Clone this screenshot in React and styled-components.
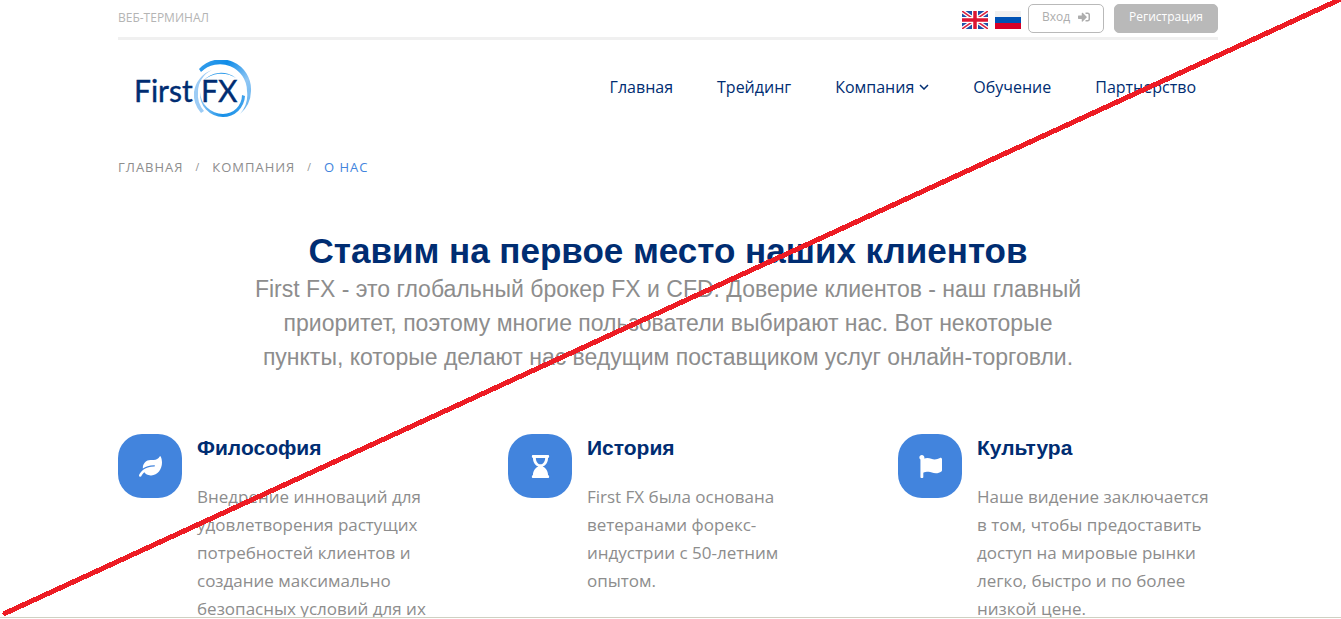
import React from "react";
import styled, { createGlobalStyle } from "styled-components";
import { FaLeaf, FaHourglassEnd, FaFlag, FaSignInAlt } from "react-icons/fa";

const navy = "#002d72";
const blue = "#4284dd";
const grey = "#8d8d8d";
const pale = "#b4b4b4";

const GlobalStyle = createGlobalStyle`
  *, *::before, *::after { box-sizing: border-box; }
  body {
    margin: 0;
    background: #fff;
    color: ${grey};
    font-family: "Open Sans", "Noto Sans", sans-serif;
  }
  h1, h2, p, ul, ol { margin: 0; padding: 0; }
  ul, ol { list-style: none; }
  a { color: inherit; text-decoration: none; }
`;

const Page = styled.div`
  position: relative;
  height: calc(100vh - 1px);
  padding-right: 5px;
  overflow: hidden;
  border-bottom: 1px solid #cfd0c2;
`;

const Container = styled.div`
  max-width: 1100px;
  margin: 0 auto;
`;

const TopBar = styled.div`
  display: flex;
  align-items: flex-start;
  justify-content: space-between;
  height: 40px;
  padding-top: 4px;
  border-bottom: 3px solid #f0f0f0;
`;

const TopLink = styled.a`
  color: ${pale};
  font-size: 12px;
  line-height: 28px;
`;

const TopActions = styled.div`
  display: flex;
  align-items: center;
`;

const FlagLink = styled.a`
  display: block;
  width: 26px;
  height: 18px;
  margin: 3px 7px 0 0;

  svg { display: block; }
`;

const Button = styled.button`
  display: flex;
  align-items: center;
  justify-content: center;
  gap: 8px;
  height: 29px;
  width: ${(p) => (p.$filled ? 104 : 76)}px;
  margin-left: ${(p) => (p.$filled ? 10 : 0)}px;
  padding: 0 0 4px;
  border: 1px solid #b9b9b9;
  border-radius: 5px;
  background: ${(p) => (p.$filled ? "#b9b9b9" : "#fff")};
  color: ${(p) => (p.$filled ? "#fff" : "#adadad")};
  font: 12px "Open Sans", "Noto Sans", sans-serif;
`;

const Header = styled.header`
  display: flex;
  align-items: center;
  justify-content: space-between;
  height: 96px;
  padding: 0 22px 0 16px;
`;

const LogoLink = styled.a`
  display: block;
  margin-top: 4px;

  svg { display: block; }
`;

const NavList = styled.ul`
  display: flex;
  gap: 44px;
  padding-bottom: 2px;
`;

const NavLink = styled.a`
  display: flex;
  align-items: center;
  gap: 5px;
  color: ${navy};
  font-size: 16px;
  line-height: 24px;
`;

const Crumbs = styled.ol`
  display: flex;
  gap: 12px;
  margin-top: 20px;
  font-size: 13px;
  line-height: 22px;
  letter-spacing: 1px;
  text-transform: uppercase;
`;

const Crumb = styled.li`
  display: flex;
  gap: 12px;
  color: ${(p) => (p.$current ? blue : grey)};

  &:not(:first-child)::before {
    content: "/";
    color: ${grey};
    font-size: 10px;
  }
`;

const Intro = styled.section`
  max-width: 840px;
  margin: 52px auto 0;
  text-align: center;
  font-family: "Liberation Sans", Arial, sans-serif;
`;

const Title = styled.h1`
  color: ${navy};
  font-size: 35px;
  line-height: 42px;
`;

const Lead = styled.p`
  font-size: 23px;
  line-height: 34px;
`;

const Features = styled.section`
  display: grid;
  grid-template-columns: repeat(3, 1fr);
  gap: 70px;
  margin-top: 60px;
`;

const Feature = styled.article`
  display: flex;
  align-items: flex-start;
  gap: 15px;
`;

const IconTile = styled.div`
  display: flex;
  flex: none;
  align-items: center;
  justify-content: center;
  width: 64px;
  height: 64px;
  border-radius: 24px;
  background: ${blue};
  color: #fff;
  font-size: 23px;
`;

const FeatureTitle = styled.h2`
  color: ${navy};
  font: bold 21px/28px "Liberation Sans", Arial, sans-serif;
`;

const FeatureText = styled.p`
  margin-top: 21px;
  font-size: 17px;
  line-height: 28px;
`;

const Strike = styled.svg`
  position: absolute;
  inset: 0;
  width: 100%;
  height: 100%;
  pointer-events: none;
`;

function Logo() {
  return (
    <svg width="118" height="60" viewBox="0 0 118 60" role="img" aria-label="First FX">
      <defs>
        <linearGradient id="outer" x1="0" y1="0" x2="1" y2="1">
          <stop offset="0" stopColor="#3fa2ec" />
          <stop offset="0.3" stopColor="#0f8ce8" />
          <stop offset="0.65" stopColor="#8fc6f4" />
          <stop offset="1" stopColor="#5aaeed" />
        </linearGradient>
        <linearGradient id="ring" x1="0" y1="0" x2="1" y2="0">
          <stop offset="0" stopColor="#8cc6f5" />
          <stop offset="0.5" stopColor="#1690e8" />
          <stop offset="1" stopColor="#3fa2ec" />
        </linearGradient>
      </defs>
      <path d="M65 9 A30 30 0 0 1 117 31 A31 31 0 0 1 106 54 A29 29 0 0 0 113 31 A27 27 0 0 0 67 12 Z" fill="url(#outer)" />
      <path d="M78 10 A27 27 0 0 0 60 32 A28 28 0 0 0 67 53 L70 51 A25 25 0 0 1 64 32 A24 24 0 0 1 78 10 Z" fill="#9dccf5" />
      <path d="M69 21 A24 24 0 0 1 102 18 A27 27 0 0 0 69 21 Z" fill="#2296ea" />
      <path d="M66 32 A23 23 0 0 0 89 57 A22 22 0 0 0 111 36 L108 35 A19 19 0 0 1 89 54 A23 23 0 0 1 66 32 Z" fill="url(#ring)" />
      <g fill={navy} stroke={navy} strokeWidth="0.4" fontFamily="Lato, sans-serif" fontSize="30">
        <text x="0" y="42">First</text>
        <text x="67" y="42">FX</text>
      </g>
    </svg>
  );
}

function BritishFlag() {
  return (
    <svg width="26" height="18" viewBox="0 0 26 18">
      <path fill="#1f4fa8" d="M0 0h26v18H0z" />
      <path stroke="#fff" strokeWidth="4" d="M0 0l26 18M26 0L0 18" />
      <path stroke="#dc2440" strokeWidth="1.5" d="M0 0l26 18M26 0L0 18" />
      <path stroke="#fff" strokeWidth="6" d="M13 0v18M0 9h26" />
      <path stroke="#dc1432" strokeWidth="3.5" d="M13 0v18M0 9h26" />
    </svg>
  );
}

function RussianFlag() {
  return (
    <svg width="26" height="18" viewBox="0 0 26 18">
      <path fill="#f0f0f0" d="M0 0h26v6H0z" />
      <path fill="#0052b4" d="M0 6h26v6H0z" />
      <path fill="#d80027" d="M0 12h26v6H0z" />
    </svg>
  );
}

function Chevron() {
  return (
    <svg width="10" height="6" viewBox="0 0 10 6" fill="none" aria-hidden="true">
      <path d="M1 1l4 4 4-4" stroke="currentColor" strokeWidth="1.5" />
    </svg>
  );
}

const navItems = [
  { label: "Главная" },
  { label: "Трейдинг" },
  { label: "Компания", menu: true },
  { label: "Обучение" },
  { label: "Партнерство" },
];

const features = [
  {
    title: "Философия",
    Icon: FaLeaf,
    text: "Внедрение инноваций для удовлетворения растущих потребностей клиентов и создание максимально безопасных условий для их",
  },
  {
    title: "История",
    Icon: FaHourglassEnd,
    text: "First FX была основана ветеранами форекс-индустрии с 50-летним опытом.",
  },
  {
    title: "Культура",
    Icon: FaFlag,
    text: "Наше видение заключается в том, чтобы предоставить доступ на мировые рынки легко, быстро и по более низкой цене.",
  },
];

export default function App() {
  return (
    <Page>
      <GlobalStyle />
      <Container>
        <TopBar>
          <TopLink href="#terminal">ВЕБ-ТЕРМИНАЛ</TopLink>
          <TopActions>
            <FlagLink href="#en" aria-label="English"><BritishFlag /></FlagLink>
            <FlagLink href="#ru" aria-label="Русский"><RussianFlag /></FlagLink>
            <Button type="button">Вход <FaSignInAlt size={12} /></Button>
            <Button type="button" $filled>Регистрация</Button>
          </TopActions>
        </TopBar>

        <Header>
          <LogoLink href="#home"><Logo /></LogoLink>
          <nav>
            <NavList>
              {navItems.map(({ label, menu }) => (
                <li key={label}>
                  <NavLink href="#">{label}{menu && <Chevron />}</NavLink>
                </li>
              ))}
            </NavList>
          </nav>
        </Header>

        <nav>
          <Crumbs>
            <Crumb><a href="#home">Главная</a></Crumb>
            <Crumb><a href="#company">Компания</a></Crumb>
            <Crumb $current aria-current="page">О нас</Crumb>
          </Crumbs>
        </nav>

        <main>
          <Intro>
            <Title>Ставим на первое место наших клиентов</Title>
            <Lead>
              First FX - это глобальный брокер FX и CFD. Доверие клиентов - наш главный
              приоритет, поэтому многие пользователи выбирают нас. Вот некоторые
              пункты, которые делают нас ведущим поставщиком услуг онлайн-торговли.
            </Lead>
          </Intro>

          <Features>
            {features.map(({ title, Icon, text }) => (
              <Feature key={title}>
                <IconTile><Icon /></IconTile>
                <div>
                  <FeatureTitle>{title}</FeatureTitle>
                  <FeatureText>{text}</FeatureText>
                </div>
              </Feature>
            ))}
          </Features>
        </main>
      </Container>
      <Strike aria-hidden="true">
        <line x1="5" y1="99.4%" x2="100%" y2="-1" stroke="#ed1c24" strokeWidth="5" strokeLinecap="round" shapeRendering="crispEdges" />
      </Strike>
    </Page>
  );
}
